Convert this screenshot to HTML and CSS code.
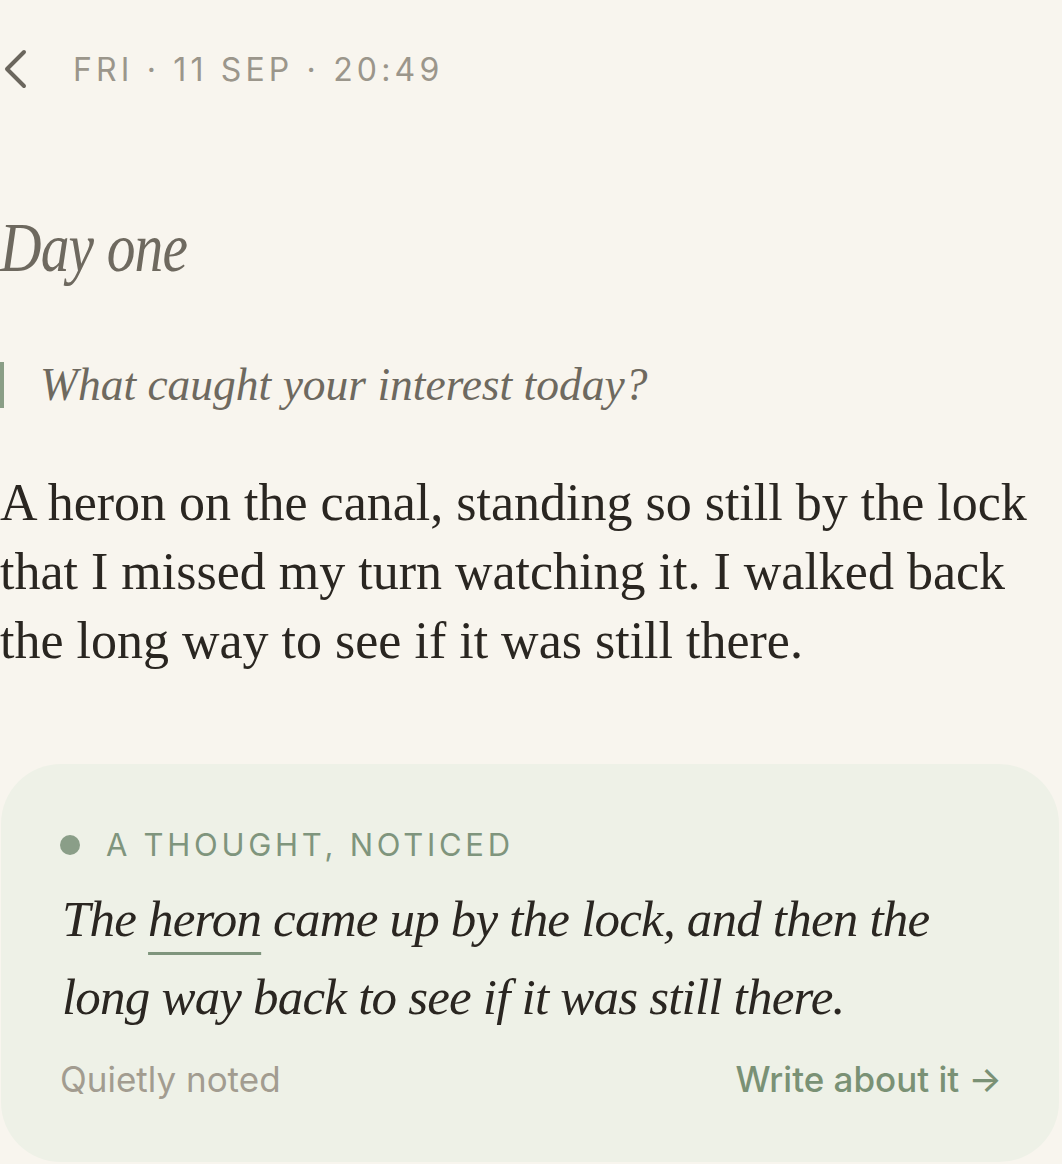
FILE: index.html
```html
<!DOCTYPE html>
<html lang="en">
<head>
<meta charset="utf-8">
<title>Day one</title>
<link rel="stylesheet" href="styles.css">
</head>
<body>
<main class="page">
  <header class="topbar">
    <button class="back" aria-label="Back">
      <svg width="24" height="40" viewBox="0 0 24 40"><path d="M21 3 L4 20 L21 37" fill="none" stroke="#6b665d" stroke-width="4" stroke-linecap="round" stroke-linejoin="round"/></svg>
    </button>
    <div class="date">FRI · 11 SEP · 20:49</div>
  </header>

  <h1 class="title">Day one</h1>

  <p class="prompt">What caught your interest today?</p>

  <p class="entry">A heron on the canal, standing so still by the lock that I missed my turn watching it. I walked back the long way to see if it was still there.</p>

  <section class="card">
    <div class="label"><span class="dot"></span>A THOUGHT, NOTICED</div>
    <p class="quote">The <span class="mark">heron</span> came up by the lock, and then the long way back to see if it was still there.</p>
    <div class="card-foot">
      <span class="muted">Quietly noted</span>
      <a class="action" href="#">Write about it →</a>
    </div>
  </section>
</main>
</body>
</html>
```

FILE: styles.css
```css
html, body {
  margin: 0;
  padding: 0;
  background: #f8f5ee;
}
body {
  font-family: "Liberation Serif", "DejaVu Serif", serif;
  color: #2a2621;
}
.page {
  width: 1062px;
  overflow: hidden;
}
.topbar {
  display: flex;
  align-items: center;
  height: 138px;
  padding-left: 3px;
  box-sizing: border-box;
}
.back {
  background: none;
  border: 0;
  padding: 0;
  width: 24px;
  height: 40px;
  display: flex;
  cursor: pointer;
}
.date {
  margin-left: 46px;
  font-family: Inter, "Liberation Sans", sans-serif;
  font-size: 32px;
  letter-spacing: 0.13em;
  color: #9b968b;
}
.title {
  margin: 70px 0 0 0;
  font-weight: 400;
  font-style: italic;
  font-size: 70px;
  line-height: 80px;
  letter-spacing: -1px;
  color: #6e695f;
  transform: scaleX(0.82);
  transform-origin: left center;
}
.prompt {
  margin: 74px 0 0 0;
  border-left: 4px solid #8a9e86;
  padding-left: 36px;
  font-style: italic;
  font-size: 45.5px;
  line-height: 46px;
  color: #6e695f;
}
.entry {
  margin: 60px 0 0 0;
  font-size: 52px;
  line-height: 69px;
  color: #2a2621;
  width: 1040px;
}
.card {
  margin: 89px 3px 0 1px;
  background: #eef1e7;
  border-radius: 60px;
  padding: 62px 57px 0 59px;
  height: 398px;
  box-sizing: border-box;
}
.label {
  display: flex;
  align-items: center;
  gap: 26px;
  font-family: Inter, "Liberation Sans", sans-serif;
  font-size: 31px;
  letter-spacing: 0.12em;
  color: #7f957d;
}
.dot {
  width: 20px;
  height: 20px;
  border-radius: 50%;
  background: #8a9e88;
}
.quote {
  margin: 17px 0 0 2px;
  font-style: italic;
  font-size: 51px;
  letter-spacing: -0.8px;
  line-height: 78px;
  color: #2a2621;
}
.mark {
  text-decoration: underline;
  text-decoration-color: #7f957d;
  text-decoration-thickness: 3px;
  text-underline-offset: 16px;
}
.card-foot {
  margin-top: 22px;
  display: flex;
  justify-content: space-between;
  align-items: center;
  font-family: Inter, "Liberation Sans", sans-serif;
  font-size: 35px;
}
.muted {
  color: #a29c90;
}
.action {
  color: #7a9175;
  font-weight: 500;
  text-decoration: none;
}
```
